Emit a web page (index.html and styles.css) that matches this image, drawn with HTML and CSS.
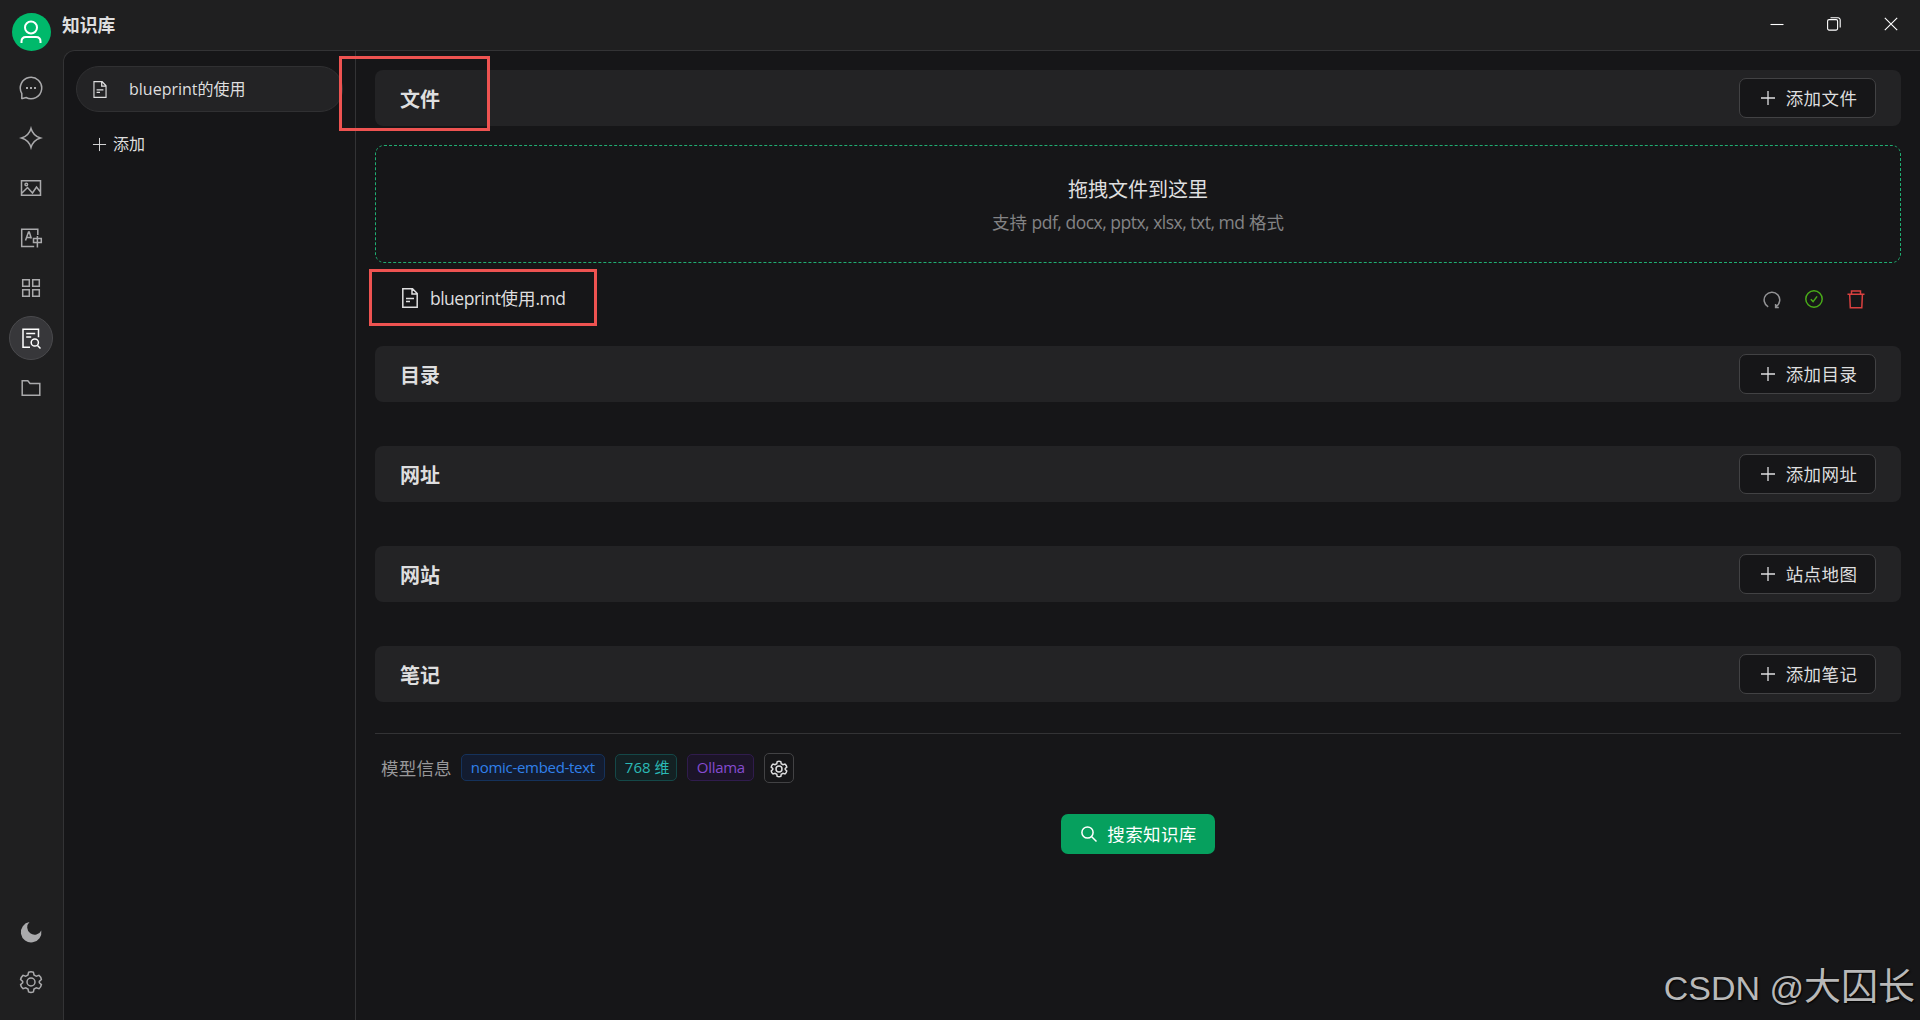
FILE: index.html
```html
<!DOCTYPE html>
<html lang="zh-CN">
<head>
<meta charset="utf-8">
<title>知识库</title>
<link rel="stylesheet" href="styles.css">
</head>
<body>
<svg class="sprite">
	<symbol id="i-plus" viewBox="0 0 16 16"><path d="M8 1v14M1 8h14"/></symbol>
	<symbol id="i-file" viewBox="0 0 16 20"><path d="M.8 .8h9.7l4.7 4.7v13.7H.8zM10 .8v5.2h5.2M4 10.5h8M4 13.5h4"/></symbol>
	<symbol id="i-gear" viewBox="0 0 24 24"><path d="M9.6 2.2c1.5-.7 3.3-.7 4.8 0l.6 2.8 2.3 1.3 2.7-.9c1.3 1 2.200 2.500 2.400 4.100L20.300 11.400v1.300l2.100 1.900c-.3 1.600-1.100 3-2.400 4.100l-2.700-.9-2.300 1.300-.6 2.800c-1.500.7-3.300.7-4.800 0L9 19.100l-2.300-1.300-2.700.9c-1.300-1-2.200-2.500-2.400-4.100l2.100-1.900v-1.300L1.600 9.500c.3-1.600 1.100-3 2.400-4.100l2.700.9L9 5z"/><circle cx="12" cy="12" r="4"/></symbol>
</svg>
<div class="app">
	<aside class="sidebar">
		<div class="avatar">
			<svg width="24" height="24" viewBox="0 0 24 24"><circle cx="12" cy="7.500" r="6"/><path d="M2.500 23v-1.500c0-3 1.500-4.500 4.500-4.500h10c3 0 4.500 1.500 4.500 4.500V23"/></svg>
		</div>
		<nav class="nav">
			<a class="nav-item"><svg width="24" height="24" viewBox="0 0 24 24"><path d="M2.800 23V17.500A10.700 10.700 0 1 1 7 21.500L2.500 22.700"/><path class="dots" d="M7 12h2M11 12h2M15 12h2"/></svg></a>
			<a class="nav-item"><svg width="24" height="24" viewBox="0 0 24 24"><path d="M12 2.500C13.600 8 16 10.400 21.500 12 16 13.600 13.600 16 12 21.500 10.400 16 8 13.600 2.500 12 8 10.400 10.400 8 12 2.500z"/></svg></a>
			<a class="nav-item"><svg width="24" height="24" viewBox="0 0 24 24"><path d="M2.500 4.700h19v14.600h-19zM2.500 17.500l6-6 5 5.500 4-6 4 5"/><circle cx="7.300" cy="8.500" r="1.300"/></svg></a>
			<a class="nav-item"><svg width="24" height="24" viewBox="0 0 24 24"><path d="M18.800 9V3.200H2.700v17.300h12.500M6.500 14.500L9.500 6h.8l2 6.500M7.500 11.500h4.200M14.500 12.500h7.800v4h-7.800zM18.400 10v11.500"/></svg></a>
			<a class="nav-item"><svg width="24" height="24" viewBox="0 0 24 24"><path d="M3.700 3.700h6.600v6.600H3.700zM13.700 3.700h6.600v6.600h-6.600zM3.700 13.700h6.600v6.600H3.700zM13.700 13.700h6.600v6.600h-6.600z"/></svg></a>
			<a class="nav-item active"><svg width="24" height="24" viewBox="0 0 24 24"><path d="M11 21.200H4V3.200h15.500v8M7.200 7.500h9M7.200 11h5M18.500 19.500l3 3"/><circle cx="15.800" cy="16.500" r="3.600"/></svg></a>
			<a class="nav-item"><svg width="24" height="24" viewBox="0 0 24 24"><path d="M3.200 19.300V4.700h5.600l2.200 2.800h9.800v11.800z"/></svg></a>
		</nav>
		<div class="nav nav-bottom">
			<a class="nav-item"><svg width="24" height="24" viewBox="0 0 24 24"><path class="solid" d="M10.500 2A10.300 10.300 0 1 0 22.300 10.500 7.400 7.400 0 1 1 10.500 2z"/></svg></a>
			<a class="nav-item"><svg width="24" height="24" viewBox="0 0 24 24"><use href="#i-gear"/></svg></a>
		</div>
	</aside>
	<div class="window">
		<header class="titlebar">
			<h1>知识库</h1>
			<div class="controls">
				<svg width="14" height="14" viewBox="0 0 14 14"><path d="M.5 7.500h13"/></svg>
				<svg width="14" height="14" viewBox="0 0 14 14"><rect x=".6" y="2.600" width="10" height="10.500" rx="1.500"/><path d="M3.500 .8h7.500a2.200 2.200 0 0 1 2.200 2.200v7.500"/></svg>
				<svg width="14" height="14" viewBox="0 0 14 14"><path d="M.8 .8l12.400 12.400M13.200 .8L.8 13.200"/></svg>
			</div>
		</header>
		<div class="panel">
			<div class="list">
				<div class="list-item"><svg width="14" height="17" viewBox="0 0 16 20"><use href="#i-file"/></svg><span>blueprint的使用</span></div>
				<div class="list-add"><svg width="15" height="15" viewBox="0 0 16 16"><use href="#i-plus"/></svg><span>添加</span></div>
			</div>
			<main class="content">
				<section class="bar">
					<h2>文件</h2>
					<button class="btn"><svg width="16" height="16"><use href="#i-plus"/></svg><span>添加文件</span></button>
				</section>
				<div class="dropzone">
					<p class="drop-title">拖拽文件到这里</p>
					<p class="drop-hint">支持 <span class="latin">pdf, docx, pptx, xlsx, txt, md</span> 格式</p>
				</div>
				<div class="file-row">
					<svg width="16" height="20" viewBox="0 0 16 20"><use href="#i-file"/></svg>
					<span class="file-name"><span class="latin">blueprint</span>使用<span class="latin">.md</span></span>
					<div class="file-actions">
						<svg class="refresh" width="18" height="18" viewBox="0 0 18 18"><path d="M5.200 15.800A7.800 7.800 0 1 1 13.200 15.500M12.600 13v3.500h3.200"/></svg>
						<svg class="ok" width="18" height="18" viewBox="0 0 18 18"><circle cx="9" cy="9" r="8.200"/><path d="M5.800 9.200l2.300 2.400 4-5.200"/></svg>
						<svg class="remove" width="18" height="19" viewBox="0 0 18 19"><path d="M.5 4.300h17M4.500 4.300V1h9v3.300M2.700 4.500l.6 13.300h11.500l.6-13.300"/></svg>
					</div>
				</div>
				<section class="bar">
					<h2>目录</h2>
					<button class="btn"><svg width="16" height="16"><use href="#i-plus"/></svg><span>添加目录</span></button>
				</section>
				<section class="bar">
					<h2>网址</h2>
					<button class="btn"><svg width="16" height="16"><use href="#i-plus"/></svg><span>添加网址</span></button>
				</section>
				<section class="bar">
					<h2>网站</h2>
					<button class="btn"><svg width="16" height="16"><use href="#i-plus"/></svg><span>站点地图</span></button>
				</section>
				<section class="bar">
					<h2>笔记</h2>
					<button class="btn"><svg width="16" height="16"><use href="#i-plus"/></svg><span>添加笔记</span></button>
				</section>
				<div class="model">
					<span class="model-label">模型信息</span>
					<span class="tag blue">nomic-embed-text</span>
					<span class="tag cyan">768 维</span>
					<span class="tag purple">Ollama</span>
					<button class="gear"><svg width="18" height="18" viewBox="0 0 24 24"><use href="#i-gear"/></svg></button>
				</div>
				<button class="search"><svg width="16" height="16" viewBox="0 0 16 16"><circle cx="6.500" cy="6.500" r="5.600"/><path d="M10.500 10.500l5 5"/></svg><span>搜索知识库</span></button>
			</main>
		</div>
	</div>
</div>
<div class="mark mark-heading"></div>
<div class="mark mark-file"></div>
<div class="watermark"><span>CSDN @</span><span class="author">大囚长</span></div>
</body>
</html>
```
FILE: styles.css
```css
* {
	box-sizing: border-box;
}
body {
	margin: 0;
	background: #1f1f20;
	color: #dededf;
	font-family: "Open Sans", "Noto Sans CJK SC", sans-serif;
	font-size: 17.5px;
	overflow: hidden;
}
h1, h2, p {
	margin: 0;
}
svg {
	display: block;
	flex: none;
	fill: none;
	stroke: currentColor;
	stroke-width: 1.5;
}
button {
	font: inherit;
	color: inherit;
	padding: 0;
}
.sprite {
	position: absolute;
	width: 0;
	height: 0;
}
.latin {
	letter-spacing: -0.5px;
}
.app {
	display: flex;
	height: 1020px;
}

/* left icon bar */
.sidebar {
	width: 63px;
	display: flex;
	flex-direction: column;
	align-items: center;
	padding: 13px 1px 13px 0;
}
.avatar {
	width: 39px;
	height: 38px;
	border-radius: 50%;
	background: #00b96b;
	color: #fff;
	display: flex;
	align-items: center;
	justify-content: center;
}
.avatar svg {
	stroke-width: 2;
}
.nav {
	display: flex;
	flex-direction: column;
	gap: 6px;
	margin-top: 15px;
}
.nav-bottom {
	margin-top: auto;
	padding-bottom: 3px;
}
.nav-item {
	width: 44px;
	height: 44px;
	border-radius: 50%;
	display: flex;
	align-items: center;
	justify-content: center;
	color: #aaaaac;
}
.nav-item.active {
	background: #37373a;
	border: 1px solid #4a4a4d;
	color: #fff;
}
.dots {
	stroke-width: 2;
}
.solid {
	fill: currentColor;
	stroke: none;
}

.window {
	flex: 1;
	display: flex;
	flex-direction: column;
}
.titlebar {
	height: 50px;
	display: flex;
	justify-content: space-between;
	padding-right: 22px;
}
.titlebar h1 {
	margin-left: -1px;
	font-size: 17.8px;
	line-height: 50px;
}
.controls {
	display: flex;
	gap: 43px;
	padding-top: 17px;
	color: #fff;
}
.controls svg {
	stroke-width: 1.1;
}
.panel {
	flex: 1;
	display: flex;
	background: #161618;
	border-top: 1px solid #333335;
	border-left: 1px solid #333335;
	border-top-left-radius: 12px;
}

/* knowledge base list */
.list {
	width: 292px;
	border-right: 1px solid #333335;
	padding: 15px 12px;
	font-size: 16px;
}
.list-item {
	width: 267px;
	height: 46px;
	border: 1px solid #303032;
	border-radius: 23px;
	background: #232325;
	display: flex;
	align-items: center;
	gap: 22px;
	padding-left: 16px;
}
.list-item span, .list-add span {
	padding-bottom: 2px;
}
.list-add {
	display: flex;
	align-items: center;
	gap: 6px;
	height: 32px;
	margin-top: 16px;
	padding-left: 16px;
}
.list-add svg {
	stroke-width: 1;
}

.content {
	flex: 1;
	display: flex;
	flex-direction: column;
	padding: 19px 19px 0;
}
.bar {
	height: 56px;
	margin-bottom: 44px;
	padding: 0 25px;
	display: flex;
	align-items: center;
	justify-content: space-between;
	background: #232325;
	border-radius: 8px;
}
.bar:first-child {
	margin-bottom: 19px;
}
.bar h2 {
	font-size: 20px;
}
.btn {
	width: 137px;
	height: 40px;
	padding-left: 2px;
	display: flex;
	align-items: center;
	justify-content: center;
	gap: 10px;
	background: #161618;
	border: 1px solid #424244;
	border-radius: 7px;
}
.btn svg {
	stroke-width: 1.3;
}
.btn span, .search span {
	letter-spacing: 0.4px;
	padding-bottom: 2px;
}
.dropzone {
	height: 118px;
	border: 1px dashed #1fae72;
	border-radius: 9px;
	text-align: center;
	padding-top: 28px;
}
.drop-title {
	font-size: 20px;
	line-height: 31px;
}
.drop-hint {
	line-height: 35px;
	color: #838385;
}
.file-row {
	display: flex;
	align-items: center;
	height: 56px;
	margin: 7px 36px 20px 27px;
}
.file-name {
	margin-left: 12px;
	padding-bottom: 1px;
}
.file-actions {
	margin-left: auto;
	display: flex;
	align-items: center;
	gap: 24px;
	padding-top: 2px;
}
.refresh {
	color: #939395;
	margin-top: 2px;
}
.ok {
	color: #49aa19;
}
.remove {
	color: #d9403f;
}

/* model line */
.model {
	display: flex;
	align-items: center;
	gap: 10px;
	height: 68px;
	margin-top: -13px;
	padding-left: 6px;
	border-top: 1px solid #333335;
}
.model-label {
	color: #98989a;
	letter-spacing: 0.2px;
	margin-right: -1px;
}
.tag {
	height: 27px;
	line-height: 25px;
	padding: 0 9px;
	border: 1px solid;
	border-radius: 5px;
	font-size: 15px;
	white-space: nowrap;
}
.blue {
	width: 144px;
	color: #3080ea;
	background: #131c30;
	border-color: #15325b;
	letter-spacing: -0.3px;
}
.cyan {
	width: 62px;
	color: #2bb9b5;
	background: #132123;
	border-color: #144848;
}
.purple {
	width: 67px;
	color: #854bcf;
	background: #1c1428;
	border-color: #301c4d;
	letter-spacing: -0.3px;
}
.gear {
	width: 30px;
	height: 30px;
	display: flex;
	align-items: center;
	justify-content: center;
	background: none;
	border: 1px solid #424244;
	border-radius: 5px;
}
.gear svg {
	stroke-width: 2;
	margin-top: 2px;
}
.search {
	align-self: center;
	width: 154px;
	height: 40px;
	margin-top: 13px;
	padding-left: 2px;
	display: flex;
	align-items: center;
	justify-content: center;
	gap: 10px;
	background: #06a05e;
	border: 0;
	border-radius: 7px;
	color: #fff;
}

/* annotations over the window */
.mark {
	position: absolute;
	border: 3px solid #ee5351;
}
.mark-heading {
	left: 339px;
	top: 56px;
	width: 151px;
	height: 75px;
}
.mark-file {
	left: 369px;
	top: 269px;
	width: 228px;
	height: 57px;
}
.watermark {
	position: absolute;
	right: 5px;
	bottom: 5px;
	display: flex;
	align-items: center;
	font: 34px/54px "Liberation Sans", "Noto Sans CJK SC", sans-serif;
	color: #b8b8b8;
	text-shadow: 1px 1px 2px #000;
	white-space: nowrap;
}
.author {
	font-size: 37px;
}
```
